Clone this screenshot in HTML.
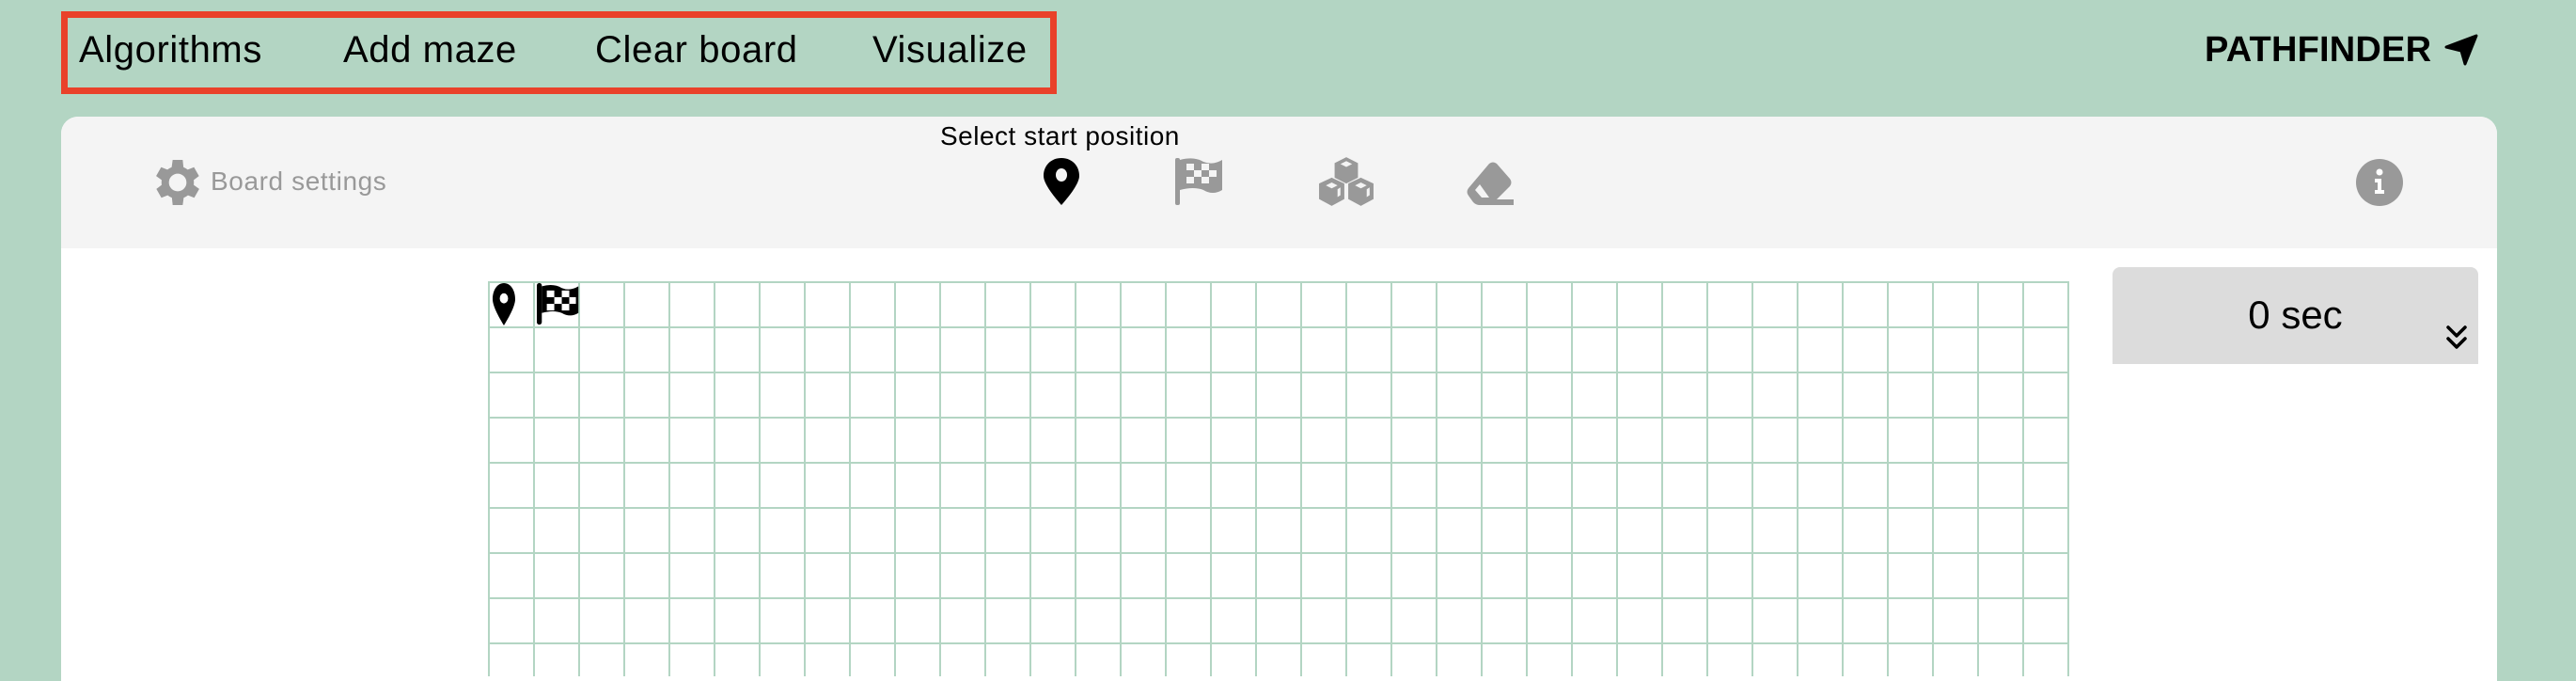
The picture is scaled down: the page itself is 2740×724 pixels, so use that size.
<!DOCTYPE html>
<html><head><meta charset="utf-8"><style>
body{margin:0;width:2740px;height:700px;background:#b3d5c3;position:relative;overflow:hidden;font-family:"Liberation Sans",sans-serif}
.a{position:absolute}
.nav{font-size:40px;letter-spacing:0.6px;color:#000;top:31px;white-space:nowrap}
.grid{left:519px;top:299px;width:1682px;height:420px;background-image:linear-gradient(to right,#b3d5c3 2px,transparent 2px),linear-gradient(to bottom,#b3d5c3 2px,transparent 2px);background-size:48px 48px;border-right:0}
</style></head><body>
<div class="a" style="left:65px;top:12px;width:1045px;height:74px;border:7px solid #e9412a"></div>
<div class="a nav" style="left:84px">Algorithms</div>
<div class="a nav" style="left:365px">Add maze</div>
<div class="a nav" style="left:633px">Clear board</div>
<div class="a nav" style="left:928px">Visualize</div>
<div class="a" style="left:2345px;top:32px;font-size:38px;letter-spacing:0.2px;font-weight:bold">PATHFINDER</div>
<svg class="a" style="left:2600px;top:36px" width="36" height="34" viewBox="0 0 36 34"><path d="M2 14 L34 2 L22 32 L18 18 Z" fill="#000" stroke="#000" stroke-width="3" stroke-linejoin="round"/></svg>

<div class="a" style="left:65px;top:124px;width:2591px;height:600px;background:#fff;border-radius:18px 18px 0 0;overflow:hidden">
 <div style="height:140px;background:#f4f4f4"></div>
</div>
<svg class="a" style="left:157px;top:162px" width="64" height="64" viewBox="0 0 24 24"><path fill="#999" d="M19.4 13a7.5 7.5 0 0 0 0-2l2.1-1.6-2-3.5-2.5 1a7.6 7.6 0 0 0-1.7-1L15 3h-4l-.4 2.9a7.6 7.6 0 0 0-1.7 1l-2.5-1-2 3.5L6.6 11a7.5 7.5 0 0 0 0 2l-2.1 1.6 2 3.5 2.5-1a7.6 7.6 0 0 0 1.7 1L11 21h4l.4-2.9a7.6 7.6 0 0 0 1.7-1l2.5 1 2-3.5zM13 15.5a3.5 3.5 0 1 1 0-7 3.5 3.5 0 0 1 0 7z" transform="translate(-1 0)"/></svg>
<div class="a" style="left:224px;top:177px;font-size:28px;letter-spacing:0.6px;color:#999">Board settings</div>
<div class="a" style="left:1000px;top:129px;font-size:28px;letter-spacing:0.5px;color:#000">Select start position</div>
<svg class="a" style="left:1110px;top:168px" width="38" height="50" viewBox="0 0 38 50"><path d="M19 0C8 0 0 8 0 19c0 9 13 24 19 31 6-7 19-22 19-31C38 8 30 0 19 0z" fill="#000"/><ellipse cx="19" cy="18" rx="6" ry="7" fill="#f4f4f4"/></svg>
<svg class="a" style="left:1250px;top:168px" width="52" height="50" viewBox="0 0 52 50"><rect x="0" y="0" width="5" height="50" rx="2" fill="#999"/><path d="M5 2 Q20 -2 30 4 Q40 8 50 2 V34 Q40 40 30 34 Q20 30 5 34Z" fill="#999"/><g fill="#f4f4f4"><rect x="12" y="6" width="8" height="7"/><rect x="28" y="6" width="8" height="7"/><rect x="20" y="13" width="8" height="7"/><rect x="36" y="13" width="8" height="7"/><rect x="12" y="20" width="8" height="7"/><rect x="28" y="20" width="8" height="7"/></g></svg>
<svg class="a" style="left:1402px;top:166px" width="60" height="54" viewBox="0 0 58 50"><g fill="#999"><path d="M29 0l12 6v15l-12 6-12-6V6z"/><path d="M14 21l13 6v16l-13 7-13-7V27z"/><path d="M44 21l13 6v16l-13 7-13-7V27z"/></g><g fill="#f4f4f4"><path d="M29 4l6 3-6 3-6-3z"/><path d="M14 26l6 3-6 3-6-3z"/><path d="M44 26l6 3-6 3-6-3z"/><path d="M20 33l3-2v8l-3 2z"/><path d="M50 33l3-2v8l-3 2z"/></g></svg>
<svg class="a" style="left:1560px;top:172px" width="52" height="46" viewBox="0 0 52 46"><path d="M24 2 Q28 -1 32 2 L46 18 Q49 22 46 26 L32 40 H50 V46 H14 Q10 46 7 43 L2 36 Q-1 32 2 28Z" fill="#999"/><path d="M14 24 L24 38 H16 L9 30Z" fill="#f4f4f4"/></svg>
<svg class="a" style="left:2505px;top:168px" width="52" height="52" viewBox="0 0 52 52"><circle cx="26" cy="26" r="25" fill="#999"/><circle cx="26" cy="15" r="3.5" fill="#fff"/><path d="M21 22h7v12h3v4H21v-4h3v-8h-3z" fill="#fff"/></svg>

<div class="a grid"></div>
<svg class="a" style="left:524px;top:301px" width="24" height="45" viewBox="0 0 38 50" preserveAspectRatio="none"><path d="M19 0C8 0 0 8 0 19c0 9 13 24 19 31 6-7 19-22 19-31C38 8 30 0 19 0z" fill="#000"/><ellipse cx="19" cy="18" rx="7" ry="6" fill="#fff"/></svg>
<svg class="a" style="left:571px;top:300px" width="46" height="46" viewBox="0 0 52 50"><rect x="0" y="0" width="6" height="50" rx="3" fill="#000"/><path d="M6 4 Q20 0 30 6 Q40 10 50 4 V36 Q40 42 30 36 Q20 32 6 36Z" fill="#000"/><g fill="#fff"><rect x="12" y="9" width="9" height="8"/><rect x="30" y="9" width="9" height="8"/><rect x="21" y="17" width="9" height="8"/><rect x="39" y="17" width="8" height="8"/><rect x="12" y="25" width="9" height="8"/><rect x="30" y="25" width="9" height="8"/></g></svg>

<div class="a" style="left:2247px;top:284px;width:389px;height:103px;background:#dcdcdc;border-radius:8px 8px 0 0"></div>
<div class="a" style="left:2247px;top:311px;width:389px;text-align:center;font-size:42px">0 sec</div>
<svg class="a" style="left:2601px;top:345px" width="24" height="27" viewBox="0 0 24 27"><path d="M3 3l9 9 9-9M3 15l9 9 9-9" fill="none" stroke="#000" stroke-width="3.5" stroke-linecap="round" stroke-linejoin="round"/></svg>
</body></html>
